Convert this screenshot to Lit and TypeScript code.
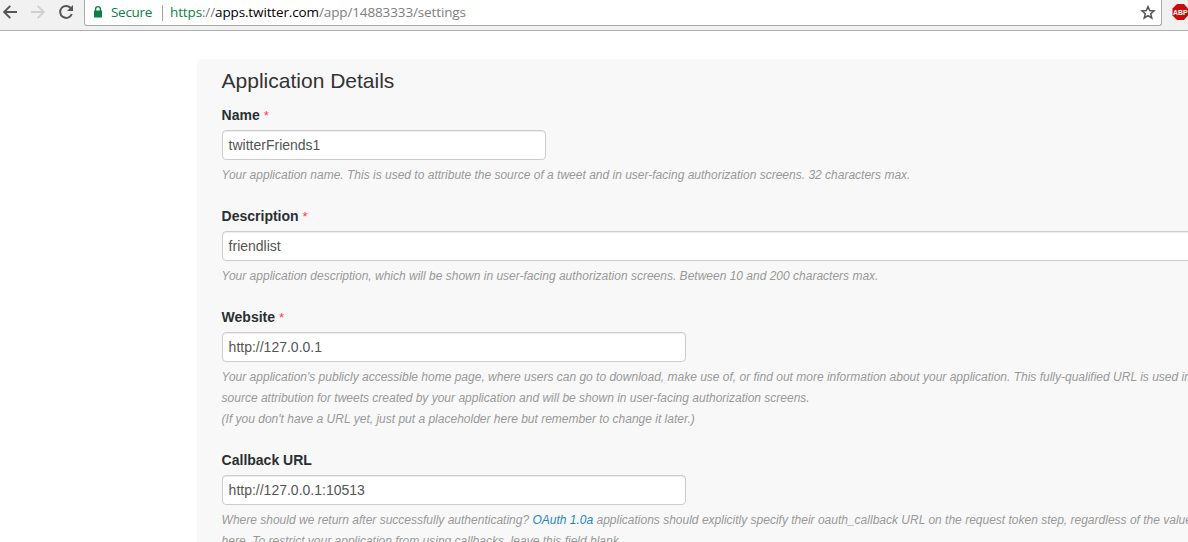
import { LitElement, html, css } from "lit";
import { customElement } from "lit/decorators.js";

@customElement("browser-bar")
class BrowserBar extends LitElement {
  static styles = css`
    :host { display: block; }
    .bar { height: 30px; background: #f1f1f1; border-bottom: 1px solid #b0b0b0; display: flex; align-items: flex-start; }
    .nav { width: 84px; height: 26px; flex: none; }
    .box { width: 1078px; flex: none; box-sizing: border-box; height: 26px; background: #fff; border: 1px solid #a9a9a9; border-top: 0; border-radius: 0 0 3px 3px; display: flex; align-items: center; font: 13.5px/24px "Open Sans", sans-serif; white-space: nowrap; }
    .lock { width: 10px; height: 26px; margin-left: 8px; }
    .secure { color: #0b8043; margin-left: 8px; width: 51px; letter-spacing: -0.3px; padding-bottom: 1px; }
    .sep { width: 1px; height: 16px; background: #a0a0a0; margin-right: 7px; }
    .url { color: #808080; letter-spacing: -0.13px; flex: 1; padding-bottom: 1px; }
    .scheme { color: #0b8043; }
    .host { color: #000; }
    .star { width: 16px; height: 26px; margin-right: 5px; }
    .abp { width: 17px; height: 26px; margin-left: 9px; flex: none; }
    .abp text { font: bold 8px "Liberation Sans", sans-serif; }
  `;
  render() {
    return html`<div class="bar">
      <svg class="nav" viewBox="0 0 84 26" fill="none" stroke-width="2">
        <path d="M17 12H4.5M10.3 5.9L4.2 12L10.3 18.1" stroke="#555" />
        <path d="M31 12H43.5M37.7 5.9L43.8 12L37.7 18.1" stroke="#d0d0d0" />
        <path d="M71.2 8.6A6 6 0 1 0 71.8 14" stroke="#555" />
        <path d="M73 5V11H67Z" fill="#555" />
      </svg>
      <div class="box">
        <svg class="lock" viewBox="0 0 10 26"><path d="M1 10.5H9V17.5H1Z" fill="#0b8043" /><path d="M2.6 11V9a2.4 2.4 0 0 1 4.8 0v2" fill="none" stroke="#0b8043" stroke-width="1.4" /></svg>
        <span class="secure">Secure</span><span class="sep"></span>
        <span class="url"><span class="scheme">https</span>://<span class="host">apps.twitter.com</span>/app/14883333/settings</span>
        <svg class="star" viewBox="0 0 16 26"><path d="M8 6.6L9.7 10.6L14 10.9L10.7 13.7L11.8 18L8 15.6L4.2 18L5.3 13.7L2 10.9L6.3 10.6Z" fill="none" stroke="#555" stroke-width="1.5" /></svg>
      </div>
      <svg class="abp" viewBox="0 0 17 26"><path d="M6 4H13L17 8.5V15.5L13 20H6L1.5 15.5V8.5Z" fill="#c70d0b" /><text x="2" y="15" textLength="14.5" lengthAdjust="spacingAndGlyphs" fill="#fff">ABP</text></svg>
    </div>`;
  }
}

@customElement("app-root")
class AppRoot extends LitElement {
  static styles = css`
    :host { display: block; height: 542px; overflow: hidden; background: #fff; }
    .panel { margin: 28px 0 0 197px; padding: 11px 0 0 24.6px; height: 500px; background: #f8f8f8; border-top-left-radius: 5px; font: 14px/21px "Liberation Sans", Arial, sans-serif; color: #292f33; white-space: nowrap; box-sizing: border-box; }
    h2 { margin: 0 0 14px; font-size: 21px; line-height: 21px; font-weight: 400; color: #333; }
    .field { margin-bottom: 20px; }
    .label { font-weight: 700; height: 21px; }
    .req { color: #ff3b4b; font-weight: 400; font-size: 13px; }
    .input { box-sizing: border-box; height: 30px; margin: 4px 0 5px; border: 1px solid #ccc; border-radius: 4px; background: #fff; box-shadow: inset 0 1px 1px rgba(0,0,0,.075); padding: 0 6px; line-height: 29px; color: #555; }
    .short { width: 324px; }
    .mid { width: 464px; }
    .full { width: 1000px; }
    .help { font-size: 12px; font-style: italic; color: #999; }
    .link { color: #1b88c0; }
  `;
  render() {
    const req = html`<span class="req">*</span>`;
    return html`<browser-bar></browser-bar>
      <div class="panel">
        <h2>Application Details</h2>
        <div class="field">
          <div class="label">Name ${req}</div>
          <div class="input short">twitterFriends1</div>
          <div class="help">Your application name. This is used to attribute the source of a tweet and in user-facing authorization screens. 32 characters max.</div>
        </div>
        <div class="field">
          <div class="label">Description ${req}</div>
          <div class="input full">friendlist</div>
          <div class="help">Your application description, which will be shown in user-facing authorization screens. Between 10 and 200 characters max.</div>
        </div>
        <div class="field">
          <div class="label">Website ${req}</div>
          <div class="input mid">http://127.0.0.1</div>
          <div class="help">Your application's publicly accessible home page, where users can go to download, make use of, or find out more information about your application. This fully-qualified URL is used in</div>
          <div class="help">source attribution for tweets created by your application and will be shown in user-facing authorization screens.</div>
          <div class="help">(If you don't have a URL yet, just put a placeholder here but remember to change it later.)</div>
        </div>
        <div class="field">
          <div class="label">Callback URL</div>
          <div class="input mid">http://127.0.0.1:10513</div>
          <div class="help">Where should we return after successfully authenticating? <span class="link">OAuth 1.0a</span> applications should explicitly specify their oauth_callback URL on the request token step, regardless of the value</div>
          <div class="help">here. To restrict your application from using callbacks, leave this field blank.</div>
        </div>
      </div>`;
  }
}
